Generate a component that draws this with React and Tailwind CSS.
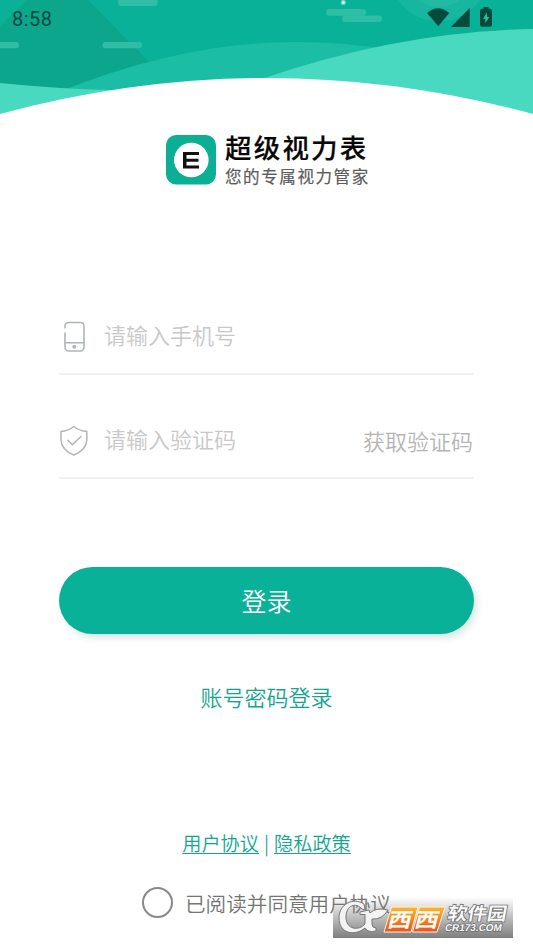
function HeaderWaves() {
  return (
    <svg className="block w-full" viewBox="0 0 533 115" height="115" preserveAspectRatio="none" aria-hidden="true">
      <rect width="533" height="115" fill="#09b199" />
      <path d="M0 26 L27 0 H88 L160 73 V115 H0Z" fill="#0ca68d" />
      <circle cx="439" cy="-28" r="49.6" fill="#17b69e" />
      <circle cx="439" cy="-28" r="34.8" fill="#23baa3" />
      <g fill="#2fbda6">
        <rect x="118" y="-4" width="39.500" height="10" rx="3" />
        <rect x="-10" y="42" width="29" height="6.300" rx="3" />
        <rect x="102.500" y="42" width="39.500" height="6.300" rx="3" />
        <rect x="326" y="9" width="40" height="6.700" rx="3.300" />
        <rect x="342" y="15.500" width="40" height="6.500" rx="3.200" />
      </g>
      <circle cx="343.300" cy="2.500" r="2.600" fill="#5fd9c4" />
      <circle cx="343.300" cy="2.500" r="1.300" fill="#fff" />
      <path d="M66 89 Q187 42 295 42 Q345 42 390 50 V115 H66Z" fill="#1bbea4" />
      <path d="M0 83 Q60 89 110 90 V115 H0Z" fill="#48d9c0" />
      <path d="M260 79.500 Q400 31 533 29 V115 H260Z" fill="#48d9c0" />
      <path d="M0 114 Q266.500 42 533 114 V115 H0Z" fill="#fff" />
    </svg>
  )
}

function StatusIcons() {
  return (
    <svg className="absolute left-[426px] top-[6px]" width="68" height="22" viewBox="426 6 68 22" fill="#044b3e" aria-hidden="true">
      <path d="M427 13 Q438 3.500 449.300 13 L438.300 26.300Z" />
      <path d="M451 27 L469.700 8 V27Z" />
      <path d="M483.500 8.800 V7 H488.500 V8.800 H490 Q492 8.800 492 10.800 V24.800 Q492 26.800 490 26.800 H482 Q480 26.800 480 24.800 V10.800 Q480 8.800 482 8.800Z" />
      <path d="M487 12.500 L483 18.700 H485.300 V23 L489.300 16.900 H487Z" fill="#36b9a0" />
    </svg>
  )
}

function Logo() {
  return (
    <div className="mt-[14px] flex h-[64px] pl-[166px]">
      <svg className="mt-[6px] shrink-0" width="50" height="50" viewBox="0 0 50 50" aria-hidden="true">
        <rect width="50" height="49.500" rx="10" fill="#0aaf94" />
        <circle cx="25.300" cy="25" r="17.300" fill="#fff" />
        <path d="M17 17 H33 V20 H20.500 V23.700 H32.500 V26.700 H20.500 V30.500 H33 V33.500 H17Z" fill="#111" />
      </svg>
      <div className="ml-[9px] whitespace-nowrap">
        <div className="h-[37px] text-[26.500px] leading-[35px] font-medium tracking-[2.200px] text-[#080808] [-webkit-text-stroke:0.2px_#080808]">超级视力表</div>
        <div className="text-[16.500px] leading-[21px] tracking-[1.600px] text-[#5c5c5c] [-webkit-text-stroke:0.2px_#5c5c5c]">您的专属视力管家</div>
      </div>
    </div>
  )
}

function PhoneIcon() {
  return (
    <svg width="30" height="32" viewBox="0 0 30 32" fill="none" stroke="#b0b5b5" strokeWidth="1.600" strokeLinecap="round">
      <path d="M6 7 V5.500 Q6 1.500 10 1.500 H21 Q25 1.500 25 5.500 V26 Q25 30 21 30 H10 Q6 30 6 26 V12" />
      <path d="M6 21.700 H25" />
      <circle cx="15.300" cy="25.700" r="2" fill="#b0b4b4" stroke="none" />
    </svg>
  )
}

function ShieldIcon() {
  return (
    <svg width="30" height="32" viewBox="0 0 30 32" fill="none" stroke="#b0b5b5" strokeWidth="1.500" strokeLinecap="round" strokeLinejoin="round">
      <path d="M14.800 1.500 Q20.500 6 27.800 6.500 V15 Q27.500 25 14.800 30 Q2.500 25 2 15 V6.500 Q9.300 6 14.800 1.500Z" />
      <path d="M8.800 15.300 L13.300 19.800 L22 11.500" />
    </svg>
  )
}

function Watermark() {
  return (
    <svg className="absolute left-[333px] top-[897px]" width="180" height="41" viewBox="0 0 180 41">
      <defs>
        <linearGradient id="fade" x1="0" y1="0" x2="0" y2="1">
          <stop offset="0" stopColor="#777" stopOpacity="0" />
          <stop offset="1" stopColor="#777" stopOpacity="0.95" />
        </linearGradient>
        <linearGradient id="orange" x1="0" y1="0" x2="0" y2="1">
          <stop offset="0" stopColor="#fbb72d" />
          <stop offset="1" stopColor="#ea521c" />
        </linearGradient>
      </defs>
      <rect width="180" height="41" fill="url(#fade)" />
      {/* swirl mark */}
      <path
        d="M31 7 C20 0 6 7 6 21 C6 36 21 40 32 31 Q35 36 43 34 V31 Q39 31 39 27 V22 Q49 23 55 13 Q43 10 37 16 L36 13 L27 15 V17.500 H32 V27 C26 34 13 33 13 20 C13 8 23 5 29 12 L32 13Z"
        fill="#f3f3f3"
        stroke="#777"
        strokeWidth="1"
      />
      {/* orange tiles */}
      <g fill="url(#orange)" stroke="#fff2df" strokeWidth="1">
        <path d="M58.500 10 H85 L78 35 H51Z" />
        <path d="M86.500 10 H112 L104 35 H79.500Z" />
      </g>
      <g fill="#fffaf2" fontWeight="700" fontSize="20" transform="skewX(-14)">
        <text x="61" y="30.500" textLength="24" lengthAdjust="spacingAndGlyphs">西</text>
        <text x="88" y="30.500" textLength="24" lengthAdjust="spacingAndGlyphs">西</text>
      </g>
      <g fill="#fafafa" stroke="#6b6b6b" strokeWidth="1.500" paintOrder="stroke" transform="skewX(-10)">
        <text x="118" y="23.500" fontSize="18" fontWeight="700" textLength="59" lengthAdjust="spacingAndGlyphs">软件园</text>
        <text x="117.500" y="34.500" fontSize="10" fontWeight="700" fontFamily="Liberation Sans" textLength="57" lengthAdjust="spacingAndGlyphs">CR173.COM</text>
      </g>
    </svg>
  )
}

export default function App() {
  return (
    <div className="relative h-[948px] w-[533px] overflow-hidden bg-white font-['Noto_Sans_CJK_SC',sans-serif]">
      <header className="relative">
        <HeaderWaves />
        <span className="absolute left-[12px] top-[7px] font-['Roboto'] text-[20px] leading-6 tracking-[0.5px] text-[#044b3e]">8:58</span>
        <StatusIcons />
      </header>

      <Logo />

      <main className="px-[59px]">
        <div className="mt-[107px] flex h-[75px] items-center border-b-2 border-[#f1f1f1]">
          <PhoneIcon />
          <span className="mb-[5px] ml-[15px] text-[22px] font-[350] leading-8 text-[#c8c8c8]">请输入手机号</span>
        </div>
        <div className="mt-[29px] flex h-[75px] items-center border-b-2 border-[#f1f1f1]">
          <ShieldIcon />
          <span className="mb-[5px] ml-[15px] text-[22px] font-[350] leading-8 text-[#c8c8c8]">请输入验证码</span>
          <span className="mb-[2px] ml-auto mr-[1px] text-[22px] font-[350] leading-8 text-[#b5b5b5]">获取验证码</span>
        </div>

        <button className="mt-[88px] block h-[67px] w-full rounded-full bg-[#09b199] text-[25px] font-[350] text-white shadow-[3px_4px_7px_rgba(9,120,90,0.16)]">
          登录
        </button>
        <div className="mt-[46px] text-center text-[22px] font-[350] leading-8 text-[#14a58e]">账号密码登录</div>
      </main>

      <div className="mt-[117px] flex justify-center gap-[5px] text-[19.200px] font-[350] leading-7 text-[#14a58e]">
        <span className="underline decoration-1 underline-offset-2">用户协议</span>
        <span>|</span>
        <span className="underline decoration-1 underline-offset-2">隐私政策</span>
      </div>
      <div className="mt-[29px] flex h-8 items-center justify-center gap-[12px]">
        <span className="size-[31px] rounded-full border-2 border-[#888]" />
        <span className="mt-[2px] text-[20.600px] font-[350] leading-8 text-[#757575]">已阅读并同意用户协议</span>
      </div>
      <Watermark />
    </div>
  )
}
